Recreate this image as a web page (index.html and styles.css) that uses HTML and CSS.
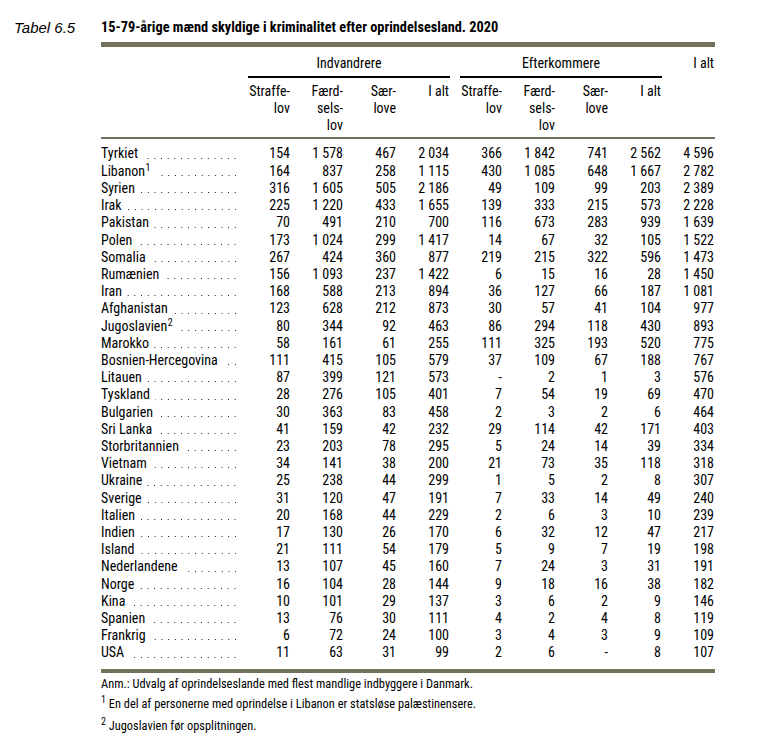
FILE: index.html
```html
<!DOCTYPE html>
<html lang="da">
<head>
<meta charset="utf-8">
<title>Tabel 6.5</title>
<link rel="stylesheet" href="styles.css">
</head>
<body>
<div class="page">
  <div class="tab-label">Tabel 6.5</div>
  <div class="content">
    <div class="title">15-79-årige mænd skyldige i kriminalitet efter oprindelsesland. 2020</div>
    <div class="rule-thick"></div>
    <div class="grow">
      <div class="group g1">Indvandrere</div>
      <div class="group g2">Efterkommere</div>
      <div class="total-head">I alt</div>
    </div>
    <div class="subrow">
      <div></div>
      <div class="sh">Straffe-<br>lov</div>
      <div class="sh">Færd-<br>sels-<br>lov</div>
      <div class="sh">Sær-<br>love</div>
      <div class="sh">I alt</div>
      <div class="sh">Straffe-<br>lov</div>
      <div class="sh">Færd-<br>sels-<br>lov</div>
      <div class="sh">Sær-<br>love</div>
      <div class="sh">I alt</div>
      <div></div>
    </div>
    <div class="rule-thin"></div>
    <div class="body">
      <div class="row"><div class="lab"><span>Tyrkiet</span><i class="lead"></i></div><div>154</div><div>1&nbsp;578</div><div>467</div><div>2&nbsp;034</div><div>366</div><div>1&nbsp;842</div><div>741</div><div>2&nbsp;562</div><div>4&nbsp;596</div></div>
      <div class="row"><div class="lab"><span>Libanon<sup>1</sup></span><i class="lead"></i></div><div>164</div><div>837</div><div>258</div><div>1&nbsp;115</div><div>430</div><div>1&nbsp;085</div><div>648</div><div>1&nbsp;667</div><div>2&nbsp;782</div></div>
      <div class="row"><div class="lab"><span>Syrien</span><i class="lead"></i></div><div>316</div><div>1&nbsp;605</div><div>505</div><div>2&nbsp;186</div><div>49</div><div>109</div><div>99</div><div>203</div><div>2&nbsp;389</div></div>
      <div class="row"><div class="lab"><span>Irak</span><i class="lead"></i></div><div>225</div><div>1&nbsp;220</div><div>433</div><div>1&nbsp;655</div><div>139</div><div>333</div><div>215</div><div>573</div><div>2&nbsp;228</div></div>
      <div class="row"><div class="lab"><span>Pakistan</span><i class="lead"></i></div><div>70</div><div>491</div><div>210</div><div>700</div><div>116</div><div>673</div><div>283</div><div>939</div><div>1&nbsp;639</div></div>
      <div class="row"><div class="lab"><span>Polen</span><i class="lead"></i></div><div>173</div><div>1&nbsp;024</div><div>299</div><div>1&nbsp;417</div><div>14</div><div>67</div><div>32</div><div>105</div><div>1&nbsp;522</div></div>
      <div class="row"><div class="lab"><span>Somalia</span><i class="lead"></i></div><div>267</div><div>424</div><div>360</div><div>877</div><div>219</div><div>215</div><div>322</div><div>596</div><div>1&nbsp;473</div></div>
      <div class="row"><div class="lab"><span>Rumænien</span><i class="lead"></i></div><div>156</div><div>1&nbsp;093</div><div>237</div><div>1&nbsp;422</div><div>6</div><div>15</div><div>16</div><div>28</div><div>1&nbsp;450</div></div>
      <div class="row"><div class="lab"><span>Iran</span><i class="lead"></i></div><div>168</div><div>588</div><div>213</div><div>894</div><div>36</div><div>127</div><div>66</div><div>187</div><div>1&nbsp;081</div></div>
      <div class="row"><div class="lab"><span>Afghanistan</span><i class="lead"></i></div><div>123</div><div>628</div><div>212</div><div>873</div><div>30</div><div>57</div><div>41</div><div>104</div><div>977</div></div>
      <div class="row"><div class="lab"><span>Jugoslavien<sup>2</sup></span><i class="lead"></i></div><div>80</div><div>344</div><div>92</div><div>463</div><div>86</div><div>294</div><div>118</div><div>430</div><div>893</div></div>
      <div class="row"><div class="lab"><span>Marokko</span><i class="lead"></i></div><div>58</div><div>161</div><div>61</div><div>255</div><div>111</div><div>325</div><div>193</div><div>520</div><div>775</div></div>
      <div class="row"><div class="lab"><span>Bosnien-Hercegovina</span><i class="lead"></i></div><div>111</div><div>415</div><div>105</div><div>579</div><div>37</div><div>109</div><div>67</div><div>188</div><div>767</div></div>
      <div class="row"><div class="lab"><span>Litauen</span><i class="lead"></i></div><div>87</div><div>399</div><div>121</div><div>573</div><div>-</div><div>2</div><div>1</div><div>3</div><div>576</div></div>
      <div class="row"><div class="lab"><span>Tyskland</span><i class="lead"></i></div><div>28</div><div>276</div><div>105</div><div>401</div><div>7</div><div>54</div><div>19</div><div>69</div><div>470</div></div>
      <div class="row"><div class="lab"><span>Bulgarien</span><i class="lead"></i></div><div>30</div><div>363</div><div>83</div><div>458</div><div>2</div><div>3</div><div>2</div><div>6</div><div>464</div></div>
      <div class="row"><div class="lab"><span>Sri Lanka</span><i class="lead"></i></div><div>41</div><div>159</div><div>42</div><div>232</div><div>29</div><div>114</div><div>42</div><div>171</div><div>403</div></div>
      <div class="row"><div class="lab"><span>Storbritannien</span><i class="lead"></i></div><div>23</div><div>203</div><div>78</div><div>295</div><div>5</div><div>24</div><div>14</div><div>39</div><div>334</div></div>
      <div class="row"><div class="lab"><span>Vietnam</span><i class="lead"></i></div><div>34</div><div>141</div><div>38</div><div>200</div><div>21</div><div>73</div><div>35</div><div>118</div><div>318</div></div>
      <div class="row"><div class="lab"><span>Ukraine</span><i class="lead"></i></div><div>25</div><div>238</div><div>44</div><div>299</div><div>1</div><div>5</div><div>2</div><div>8</div><div>307</div></div>
      <div class="row"><div class="lab"><span>Sverige</span><i class="lead"></i></div><div>31</div><div>120</div><div>47</div><div>191</div><div>7</div><div>33</div><div>14</div><div>49</div><div>240</div></div>
      <div class="row"><div class="lab"><span>Italien</span><i class="lead"></i></div><div>20</div><div>168</div><div>44</div><div>229</div><div>2</div><div>6</div><div>3</div><div>10</div><div>239</div></div>
      <div class="row"><div class="lab"><span>Indien</span><i class="lead"></i></div><div>17</div><div>130</div><div>26</div><div>170</div><div>6</div><div>32</div><div>12</div><div>47</div><div>217</div></div>
      <div class="row"><div class="lab"><span>Island</span><i class="lead"></i></div><div>21</div><div>111</div><div>54</div><div>179</div><div>5</div><div>9</div><div>7</div><div>19</div><div>198</div></div>
      <div class="row"><div class="lab"><span>Nederlandene</span><i class="lead"></i></div><div>13</div><div>107</div><div>45</div><div>160</div><div>7</div><div>24</div><div>3</div><div>31</div><div>191</div></div>
      <div class="row"><div class="lab"><span>Norge</span><i class="lead"></i></div><div>16</div><div>104</div><div>28</div><div>144</div><div>9</div><div>18</div><div>16</div><div>38</div><div>182</div></div>
      <div class="row"><div class="lab"><span>Kina</span><i class="lead"></i></div><div>10</div><div>101</div><div>29</div><div>137</div><div>3</div><div>6</div><div>2</div><div>9</div><div>146</div></div>
      <div class="row"><div class="lab"><span>Spanien</span><i class="lead"></i></div><div>13</div><div>76</div><div>30</div><div>111</div><div>4</div><div>2</div><div>4</div><div>8</div><div>119</div></div>
      <div class="row"><div class="lab"><span>Frankrig</span><i class="lead"></i></div><div>6</div><div>72</div><div>24</div><div>100</div><div>3</div><div>4</div><div>3</div><div>9</div><div>109</div></div>
      <div class="row"><div class="lab"><span>USA</span><i class="lead"></i></div><div>11</div><div>63</div><div>31</div><div>99</div><div>2</div><div>6</div><div>-</div><div>8</div><div>107</div></div>
    </div>
    <div class="rule-bottom"></div>
    <div class="notes">
      <p class="note n0">Anm.: Udvalg af oprindelseslande med flest mandlige indbyggere i Danmark.</p>
      <p class="note n1"><sup>1</sup> En del af personerne med oprindelse i Libanon er statsløse palæstinensere.</p>
      <p class="note n2"><sup>2</sup> Jugoslavien før opsplitningen.</p>
    </div>
  </div>
</div>
</body>
</html>
```
FILE: styles.css
```css
html, body {
  margin: 0;
  padding: 0;
  background: #fff;
}

body {
  color: #000;
  font-family: Roboto, "Liberation Sans", sans-serif;
  font-stretch: 80%;
}

.page {
  display: flex;
  padding: 19px 0 0 14px;
}

.tab-label {
  width: 87px;
  flex: none;
  font-family: "Liberation Sans", Arial, sans-serif;
  font-stretch: normal;
  font-style: italic;
  font-size: 15px;
  line-height: 18px;
}

.content {
  width: 614px;
  flex: none;
}

.title {
  font-weight: bold;
  font-size: 14.35px;
  line-height: 18px;
  margin-bottom: 5px;
}

.rule-thick {
  height: 5px;
  background: #74725f;
}

.grow,
.subrow,
.row {
  display: grid;
  grid-template-columns: 137px repeat(9, 53px);
  font-size: 14px;
  line-height: 17px;
}

.grow {
  height: 29px;
}

.group {
  grid-row: 1;
  margin-left: 10px;
  border-bottom: 2px solid #000;
  text-align: center;
  padding-top: 7.6px;
  box-sizing: border-box;
  height: 31px;
}

.g1 { grid-column: 2 / span 4; }
.g2 { grid-column: 6 / span 4; }

.total-head {
  grid-row: 1;
  grid-column: 10;
  text-align: right;
  padding-right: 1px;
  padding-top: 7.6px;
}

.subrow {
  padding-top: 6.6px;
  padding-bottom: 3.4px;
}

.sh {
  text-align: right;
  padding-right: 1px;
}

.rule-thin {
  height: 2px;
  background: #74725f;
}

.body {
  padding-top: 6.5px;
  padding-bottom: 7.5px;
}

.row {
  line-height: 17.2px;
}

.row > div {
  text-align: right;
  padding-right: 1px;
  white-space: nowrap;
}

.row > .lab {
  display: flex;
  text-align: left;
  padding-right: 2px;
}

.lab span {
  flex: none;
}

.lead {
  flex: 1;
  margin-left: 5px;
  background-image: linear-gradient(90deg, #1a1a1a 0, #1a1a1a 1.3px, transparent 1.3px);
  background-size: 6.7px 1.3px;
  background-repeat: repeat-x;
  background-position: right -5.4px bottom 3.7px;
}

sup {
  font-size: 10px;
  line-height: 0;
  vertical-align: 5px;
  margin-left: 0.5px;
}

.rule-bottom {
  height: 4px;
  background: #74725f;
}

.notes {
  padding-top: 2.8px;
}

.note {
  margin: 0;
  font-size: 12.4px;
  line-height: 15px;
}

.n1 { margin-top: 5px; }
.n2 { margin-top: 7.5px; }

.note sup {
  font-size: 10px;
  vertical-align: 5px;
  margin-left: 0;
}
```
